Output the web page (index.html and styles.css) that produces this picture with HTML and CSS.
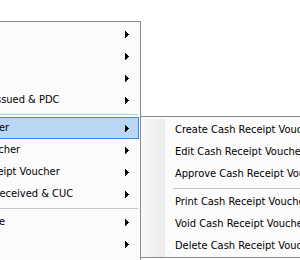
FILE: index.html
```html
<!DOCTYPE html>
<html>
<head>
<meta charset="utf-8">
<link rel="stylesheet" href="styles.css">
</head>
<body>
<div class="page">
  <div class="menu main">
    <div class="items">
      <div class="item"><span class="label">Ledger</span><svg class="arrow" width="4" height="7" viewBox="0 0 4 7"><rect x="0" y="0" width="1" height="7"/><rect x="1" y="1" width="1" height="5"/><rect x="2" y="2" width="1" height="3"/><rect x="3" y="3" width="1" height="1"/></svg></div>
      <div class="item"><span class="label">Journal</span><svg class="arrow" width="4" height="7" viewBox="0 0 4 7"><rect x="0" y="0" width="1" height="7"/><rect x="1" y="1" width="1" height="5"/><rect x="2" y="2" width="1" height="3"/><rect x="3" y="3" width="1" height="1"/></svg></div>
      <div class="item"><span class="label">Contra</span><svg class="arrow" width="4" height="7" viewBox="0 0 4 7"><rect x="0" y="0" width="1" height="7"/><rect x="1" y="1" width="1" height="5"/><rect x="2" y="2" width="1" height="3"/><rect x="3" y="3" width="1" height="1"/></svg></div>
      <div class="item"><span class="label">Cheque Issued &amp; PDC</span><svg class="arrow" width="4" height="7" viewBox="0 0 4 7"><rect x="0" y="0" width="1" height="7"/><rect x="1" y="1" width="1" height="5"/><rect x="2" y="2" width="1" height="3"/><rect x="3" y="3" width="1" height="1"/></svg></div>
      <div class="sep"></div>
      <div class="item active"><span class="label">CR Voucher</span><svg class="arrow" width="4" height="7" viewBox="0 0 4 7"><rect x="0" y="0" width="1" height="7"/><rect x="1" y="1" width="1" height="5"/><rect x="2" y="2" width="1" height="3"/><rect x="3" y="3" width="1" height="1"/></svg></div>
      <div class="item"><span class="label">Bank Voucher</span><svg class="arrow" width="4" height="7" viewBox="0 0 4 7"><rect x="0" y="0" width="1" height="7"/><rect x="1" y="1" width="1" height="5"/><rect x="2" y="2" width="1" height="3"/><rect x="3" y="3" width="1" height="1"/></svg></div>
      <div class="item"><span class="label">Cash Receipt Voucher</span><svg class="arrow" width="4" height="7" viewBox="0 0 4 7"><rect x="0" y="0" width="1" height="7"/><rect x="1" y="1" width="1" height="5"/><rect x="2" y="2" width="1" height="3"/><rect x="3" y="3" width="1" height="1"/></svg></div>
      <div class="item"><span class="label">Cheque Received &amp; CUC</span><svg class="arrow" width="4" height="7" viewBox="0 0 4 7"><rect x="0" y="0" width="1" height="7"/><rect x="1" y="1" width="1" height="5"/><rect x="2" y="2" width="1" height="3"/><rect x="3" y="3" width="1" height="1"/></svg></div>
      <div class="sep"></div>
      <div class="item"><span class="label">Debit Note</span><svg class="arrow" width="4" height="7" viewBox="0 0 4 7"><rect x="0" y="0" width="1" height="7"/><rect x="1" y="1" width="1" height="5"/><rect x="2" y="2" width="1" height="3"/><rect x="3" y="3" width="1" height="1"/></svg></div>
      <div class="item"><span class="label">Reports</span><svg class="arrow" width="4" height="7" viewBox="0 0 4 7"><rect x="0" y="0" width="1" height="7"/><rect x="1" y="1" width="1" height="5"/><rect x="2" y="2" width="1" height="3"/><rect x="3" y="3" width="1" height="1"/></svg></div>
      <div class="item"><span class="label">Settings</span></div>
    </div>
  </div>
  <div class="menu sub">
    <div class="items">
      <div class="item"><span class="label">Create Cash Receipt Voucher</span></div>
      <div class="item"><span class="label">Edit Cash Receipt Voucher</span></div>
      <div class="item"><span class="label">Approve Cash Receipt Voucher</span></div>
      <div class="sep"></div>
      <div class="item"><span class="label">Print Cash Receipt Voucher</span></div>
      <div class="item"><span class="label">Void Cash Receipt Voucher</span></div>
      <div class="item"><span class="label">Delete Cash Receipt Voucher</span></div>
    </div>
  </div>
</div>
</body>
</html>
```
FILE: styles.css
```css
html, body {
  margin: 0;
  padding: 0;
  background: #ffffff;
}
.page {
  position: relative;
  width: 300px;
  height: 260px;
  overflow: hidden;
  font-family: "DejaVu Sans Condensed", "DejaVu Sans", sans-serif;
  font-size: 11px;
  color: #000;
}
.menu {
  position: absolute;
  box-sizing: border-box;
  background: #fbfbfb;
  border: 1px solid #8a8a8a;
}
.main {
  left: -84px;
  top: 21px;
  width: 225px;
  padding: 1px 1px 1px 1px;
}
.sub {
  left: 140px;
  top: 116px;
  width: 200px;
  padding: 2px 0 0 0;
}
.items {
  background: linear-gradient(to right, #f9f9f9, #ebebeb) 0 0 / 24px 100% no-repeat;
}
.item {
  display: flex;
  height: 22px;
  box-sizing: border-box;
  padding-left: 33px;
  padding-right: 9px;
  border: 1px solid transparent;
  align-items: center;
  white-space: nowrap;
}
.sub .item {
  padding-left: 33px;
}
.item.active {
  background: #b9d7f4;
  border-color: #3a8ee6;
}
.label {
  flex: 1;
  line-height: 20px;
}
.arrow {
  display: block;
  fill: #000;
  align-self: flex-start;
  margin-top: 7px;
}
.sep {
  height: 1px;
  margin: 3px 1px 2px 32px;
  background: #c6c6c6;
}
.sub .sep {
  margin-left: 32px;
}
```
